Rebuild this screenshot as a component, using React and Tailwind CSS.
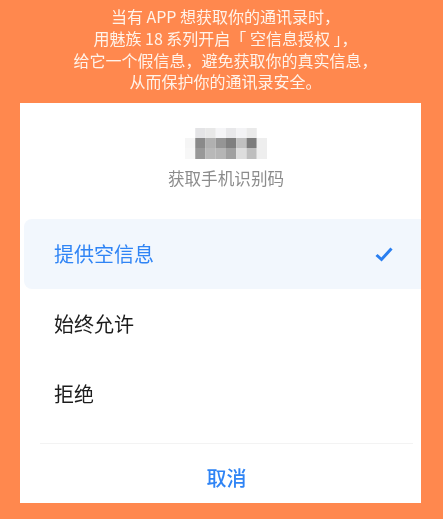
const cjk = { fontFamily: '"Noto Sans CJK SC", "Noto Sans", sans-serif' };

const cells = [
  [null, '#e4e4e6', '#e8e8e8', '#f5f5f7', '#e8e8ea', '#f3f3f5', '#eaeaea', null],
  ['#f5f5f5', '#8a8a8a', '#b0b0b0', '#959595', '#7f7f7f', '#c0c0c0', '#7c7c7c', '#eeeeee'],
  ['#f7f7f7', '#989898', '#b8b8b8', '#b5b5b5', '#a0a0a0', '#dddddd', '#bebebe', '#eeeeee'],
];

function Mosaic() {
  return (
    <svg width="82" height="31" viewBox="0 0 80 31" preserveAspectRatio="none" className="block blur-[0.5px]">
      {cells.map((row, y) =>
        row.map((c, x) =>
          c ? <rect key={`${x}-${y}`} x={x * 10} y={y * 10} width="10" height={y === 2 ? 11 : 10} fill={c} /> : null
        )
      )}
    </svg>
  );
}

export default function App() {
  return (
    <div style={cjk} className="h-[519px] w-[443px] overflow-hidden bg-[#ff884e] px-5 pt-[6px]">
      <div className="pl-[8px] text-center text-[16px] leading-[21.75px] text-[#fff3ea] blur-[0.4px]">
        <p>当有 APP 想获取你的通讯录时，</p>
        <p>用魅族 18 系列开启「 空信息授权 」，</p>
        <p>给它一个假信息，避免获取你的真实信息，</p>
        <p>从而保护你的通讯录安全。</p>
      </div>
      <div className="mt-[10px] h-[400px] w-[401px] bg-white pl-1">
        <div className="flex flex-col items-center pl-[6px] pt-[25px]">
          <Mosaic />
          <p className="mt-[7px] pl-px text-[16.6px] leading-[24px] text-[#8c8c8c] blur-[0.3px]">获取手机识别码</p>
        </div>
        <div className="mt-[29px] flex h-[70px] items-center justify-between rounded-l-[8px] bg-[#f2f7fd] pl-[30px] pr-[28px]">
          <span className="text-[20px] leading-[28px] text-[#2f84f5] blur-[0.3px]">提供空信息</span>
          <svg width="18" height="15" viewBox="0 0 18 15" fill="none" className="block">
            <path d="M1.5 8 L6.5 12.5 L16.5 1.5" stroke="#2a7ff0" strokeWidth="3" />
          </svg>
        </div>
        <div className="flex h-[70px] items-center pl-[30px] text-[20px] leading-[28px] text-[#1c1c1c] blur-[0.3px]">始终允许</div>
        <div className="flex h-[70px] items-center pl-[30px] text-[20px] leading-[28px] text-[#1c1c1c] blur-[0.3px]">拒绝</div>
        <div className="ml-4 mr-2 mt-[14px] border-t border-[#f3f3f3] pt-[20px] text-center">
          <span className="text-[20px] font-medium leading-[28px] text-[#2f84f5] blur-[0.3px]">取消</span>
        </div>
      </div>
    </div>
  );
}
